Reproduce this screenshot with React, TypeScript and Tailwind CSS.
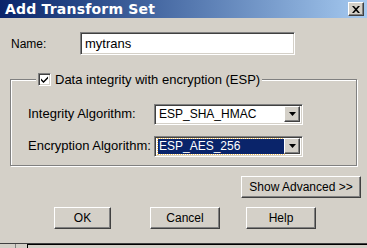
import React from "react";

const raised =
  "bg-[#d4d0c8] border border-t-white border-l-white border-r-[#404040] border-b-[#404040] shadow-[inset_-1px_-1px_0_#808080]";
const sunken =
  "border border-t-[#808080] border-l-[#808080] border-r-white border-b-white shadow-[inset_1px_1px_0_#404040,inset_-1px_-1px_0_#d4d0c8]";

const Button = ({ label, w }: { label: string; w: string }) => (
  <button className={`${raised} ${w} h-[22px] flex items-center justify-center text-[12px] text-black`}>
    {label}
  </button>
);

const Arrow = () => (
  <div className={`${raised} w-[16px] h-[16px] flex items-center justify-center`}>
    <svg width="7" height="4" viewBox="0 0 7 4">
      <path d="M0 0h7L3.5 4z" fill="#000" />
    </svg>
  </div>
);

const Select = ({ value, active }: { value: string; active?: boolean }) => (
  <div className={`${sunken} w-[149px] h-[21px] bg-white flex items-center p-[2px]`}>
    <div className="flex-1 h-full flex items-center pl-[1px]">
      {active ? (
        <span className="h-full w-full flex items-center bg-[#0a246a] text-white pl-[1px] outline outline-1 outline-dotted outline-[#f0c060]">
          {value}
        </span>
      ) : (
        <span className="pl-[1px] text-black">{value}</span>
      )}
    </div>
    <Arrow />
  </div>
);

export default function App() {
  return (
    <div className="w-[367px] h-[248px] bg-[#d4d0c8] flex flex-col overflow-hidden text-[12px] text-black font-['Liberation_Sans',Arial,sans-serif]">
      <div className="h-[18px] flex items-center justify-between bg-gradient-to-r from-[#0a246a] to-[#a6caf0] pl-[5px] pr-[3px]">
        <span className="text-white font-bold text-[14px] leading-none font-['DejaVu_Sans',sans-serif] tracking-[0.2px]">
          Add Transform Set
        </span>
        <div className={`${raised} w-[16px] h-[14px] flex items-center justify-center`}>
          <svg width="8" height="7" viewBox="0 0 8 7">
            <path d="M0 0h2l2 2.3L6 0h2L5 3.5 8 7H6L4 4.7 2 7H0l3-3.5z" fill="#000" />
          </svg>
        </div>
      </div>

      <div className="flex items-center mt-[14px]">
        <span className="pl-[11px] w-[80px]">Name:</span>
        <div className={`${sunken} w-[215px] h-[23px] bg-white flex items-center pl-[4px] text-[13px]`}>
          mytrans
        </div>
      </div>

      <fieldset className="ml-[10px] mt-[15px] w-[347px] h-[96px] border border-[#808080] shadow-[1px_1px_0_#fff,inset_1px_1px_0_#fff] pl-[17px] pt-[14px]">
        <legend className="ml-[8px] px-[2px] bg-[#d4d0c8] flex items-center gap-[4px] text-[13px]">
          <span className={`${sunken} w-[13px] h-[13px] bg-white flex items-center justify-center`}>
            <svg width="7" height="7" viewBox="0 0 7 7">
              <path d="M0 2.5l2.5 2.5L7 0.5v2L2.5 7 0 4.5z" fill="#000" />
            </svg>
          </span>
          Data integrity with encryption (ESP)
        </legend>
        <div className="flex items-center">
          <span className="w-[126px] text-[13px]">Integrity Algorithm:</span>
          <Select value="ESP_SHA_HMAC" />
        </div>
        <div className="flex items-center mt-[11px]">
          <span className="w-[126px] text-[13px]">Encryption Algorithm:</span>
          <Select value="ESP_AES_256" active />
        </div>
      </fieldset>

      <div className="flex justify-end pr-[6px] mt-[10px]">
        <Button label="Show Advanced >>" w="w-[120px]" />
      </div>

      <div className="flex mt-[9px] pl-[54px]">
        <Button label="OK" w="w-[57px]" />
        <div className="w-[39px]" />
        <Button label="Cancel" w="w-[70px]" />
        <div className="w-[26px]" />
        <Button label="Help" w="w-[70px]" />
      </div>

      <div className="mt-auto h-[5px] border-t border-[#404040] flex">
        <div className="w-[16px] border-r border-[#808080]" />
        <div className="w-[12px] border-r border-black" />
        <div className="flex-1 border-t border-black" />
      </div>
    </div>
  );
}
